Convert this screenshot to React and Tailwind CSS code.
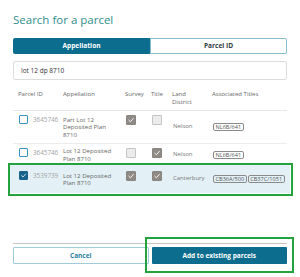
import React from "react";

function Check({ color = "white" }) {
  return (
    <svg viewBox="0 0 10 10" className="w-full h-full">
      <polyline points="2.2,5.2 4.2,7.2 8,2.9" fill="none" stroke={color} strokeWidth="1.1" strokeLinecap="round" strokeLinejoin="round" />
    </svg>
  );
}

function SelectBox({ checked }) {
  return checked ? (
    <div className="w-[9px] h-[9px] bg-[#17628c] border border-[#17628c] rounded-[1px] flex items-center justify-center shrink-0">
      <Check />
    </div>
  ) : (
    <div className="w-[9px] h-[9px] bg-white border-[1.5px] border-[#3d8fbd] rounded-[1px] shrink-0" />
  );
}

function GrayBox({ checked }) {
  return checked ? (
    <div className="w-[10px] h-[10px] bg-[#8f8a85] border border-[#8a847f] rounded-[1px] flex items-center justify-center">
      <Check />
    </div>
  ) : (
    <div className="w-[10px] h-[10px] bg-[#ececec] border border-[#c4c4c4] rounded-[1px]" />
  );
}

function Tag({ children }) {
  return (
    <span className="inline-flex items-center h-[8px] px-[1.5px] border border-[#8a8a8a] rounded-[2px] text-[5.6px] leading-[6px] text-[#555]">
      {children}
    </span>
  );
}

function Row({ id, checked, appellation, survey, title, district, tags, h, pt, cls = "" }) {
  return (
    <div className={`grid grid-cols-[50px_62px_26px_21px_40px_1fr] ${h} ${cls}`}>
      <div className={`flex items-center gap-[5px] pl-[6px] self-start ${pt}`}>
        <SelectBox checked={checked} />
        <span className="text-[6.3px] leading-[9px] text-[#a3a3a3]">{id}</span>
      </div>
      <div className="self-center text-[6.1px] leading-[7.5px] text-[#666]">{appellation}</div>
      <div className={`self-start pl-[1px] ${pt}`}>
        <GrayBox checked={survey} />
      </div>
      <div className={`self-start pl-[1px] ${pt}`}>
        <GrayBox checked={title} />
      </div>
      <div className="self-center pl-[1px] text-[6px] leading-[7.5px] text-[#777]">{district}</div>
      <div className="self-center pl-[1px] flex gap-[1px]">
        {tags.map((t) => (
          <Tag key={t}>{t}</Tag>
        ))}
      </div>
    </div>
  );
}

export default function App() {
  return (
    <div className="w-[300px] h-[277px] bg-white flex flex-col px-[13px] font-['Open_Sans',sans-serif] overflow-hidden">
      <h1 className="pt-[12px] text-[11.5px] leading-[16px] text-[#2f8f8d]">Search for a parcel</h1>

      <div className="mt-[10px] h-[16px] grid grid-cols-2">
        <div className="bg-[#0d6d8e] rounded-l-[2px] flex items-center justify-center text-white font-bold text-[6.6px]">
          Appellation
        </div>
        <div className="bg-white border border-[#86bdd0] rounded-r-[2px] flex items-center justify-center text-[#2f3d45] font-bold text-[6.6px]">
          Parcel ID
        </div>
      </div>

      <div className="mt-[7px] h-[19px] border border-[#dcdcdc] rounded-[2px] flex items-center pl-[7px] text-[6.5px] text-[#333]">
        lot 12 dp 8710
      </div>

      <div className="mt-[11px] grid grid-cols-[50px_62px_26px_21px_40px_1fr] text-[6px] leading-[7.5px] text-[#666] pb-[4px] border-b border-[#e6e6e6]">
        <div className="pl-[5px]">Parcel ID</div>
        <div>Appellation</div>
        <div>Survey</div>
        <div>Title</div>
        <div>
          Land
          <br />
          District
        </div>
        <div>Associated Titles</div>
      </div>

      <Row
        id="3645746"
        checked={false}
        appellation={
          <>
            Part Lot 12
            <br />
            Deposited Plan
            <br />
            8710
          </>
        }
        survey
        title={false}
        district="Nelson"
        tags={["NL6B/641"]}
        h="h-[33px]"
        pt="pt-[4px]"
        cls="border-b border-[#ececec]"
      />
      <Row
        id="3645746"
        checked={false}
        appellation={
          <>
            Lot 12 Deposited
            <br />
            Plan 8710
          </>
        }
        survey={false}
        title
        district="Nelson"
        tags={["NL6B/641"]}
        h="h-[21px]"
        pt="pt-[4px]"
      />
      <div className="relative -mx-[3px] px-[3px] bg-[#e3f1f6]">
        <Row
          id="3539739"
          checked
          appellation={
            <>
              Lot 12 Deposited
              <br />
              Plan 8710
            </>
          }
          survey
          title
          district="Canterbury"
          tags={["CB36A/500", "CB37C/1051"]}
          h="h-[28px]"
          pt="pt-[6px]"
        />
        <span className="absolute -left-[2px] -right-[3px] -top-[2px] -bottom-[3px] border-2 border-[#23a23d] pointer-events-none" />
      </div>

      <div className="mt-auto border-t border-[#c4c4c4] pt-[3px] pb-[13px] grid grid-cols-2 gap-[3px]">
        <div className="h-[17px] bg-white border border-[#9fcbdb] rounded-[1px] flex items-center justify-center text-[#2b7fa1] font-bold text-[6.5px]">
          Cancel
        </div>
        <div className="relative">
          <div className="h-[17px] bg-[#0d6d8e] rounded-[1px] flex items-center justify-center text-white font-bold text-[6.5px]">
            Add to existing parcels
          </div>
          <span className="absolute -left-[7px] -right-[7px] -top-[10px] -bottom-[9px] border-2 border-[#23a23d] pointer-events-none" />
        </div>
      </div>
    </div>
  );
}
